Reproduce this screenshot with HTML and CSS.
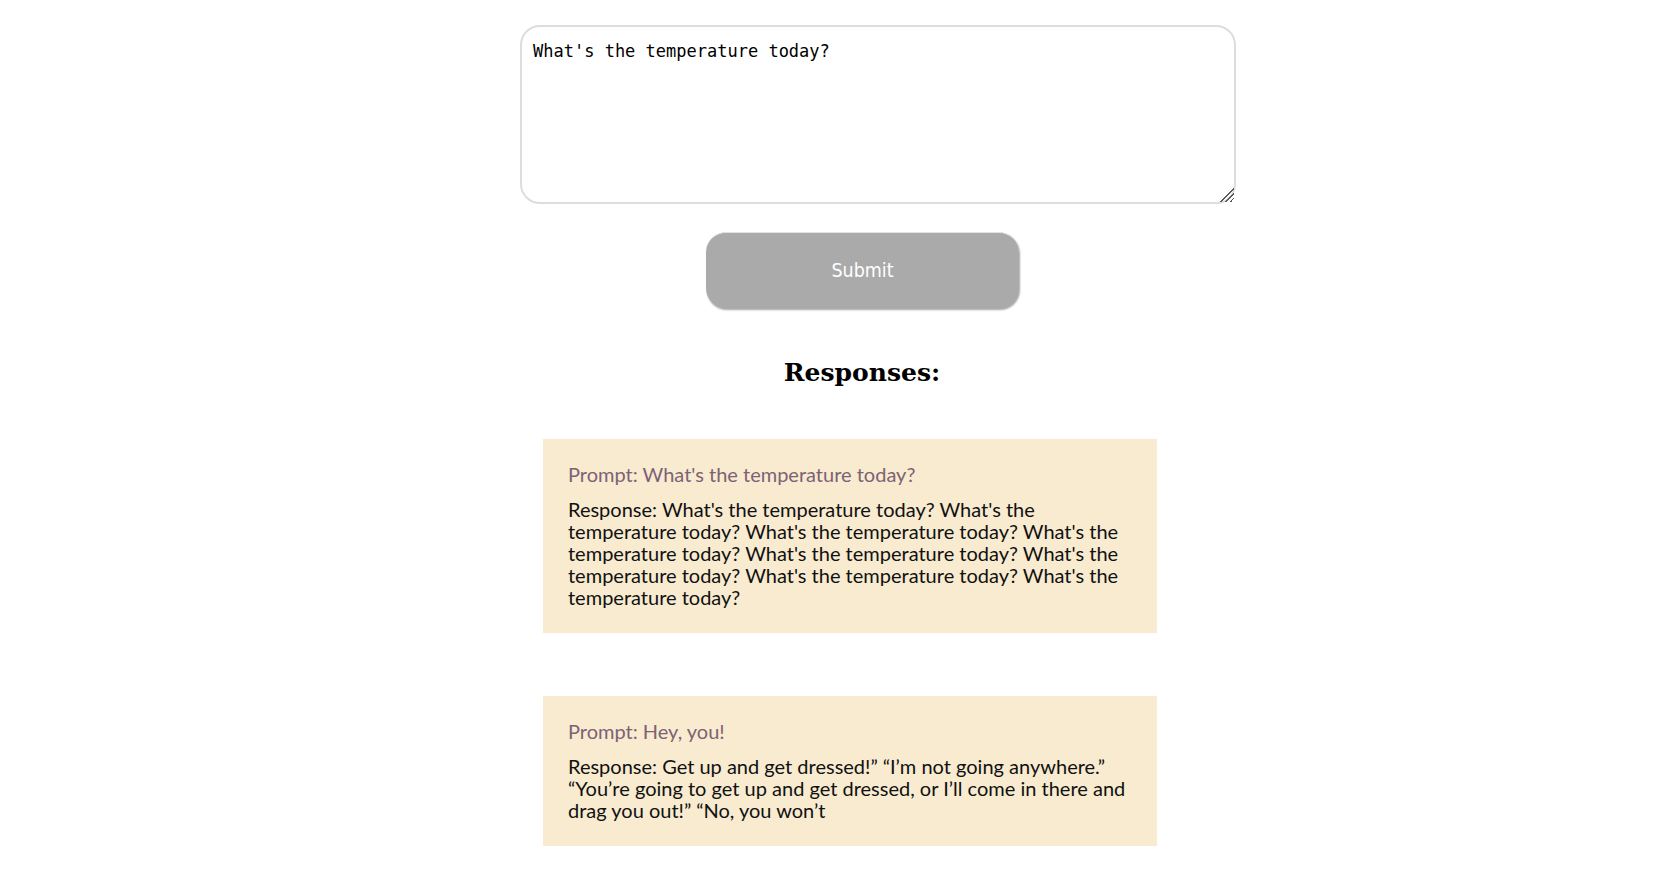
FILE: index.html
```html
<!DOCTYPE html>
<html lang="en">
<head>
<meta charset="utf-8">
<title>Responses</title>
<link rel="stylesheet" href="styles.css">
</head>
<body>
<main class="page">
  <form class="ask">
    <textarea class="prompt-input">What's the temperature today?</textarea>
    <button type="button" class="submit">Submit</button>
  </form>
  <section class="responses">
    <h2 class="responses-title">Responses:</h2>
    <article class="card">
      <p class="card-prompt">Prompt: What's the temperature today?</p>
      <p class="card-response">Response: What's the temperature today? What's the temperature today? What's the temperature today? What's the temperature today? What's the temperature today? What's the temperature today? What's the temperature today? What's the temperature today?</p>
    </article>
    <article class="card">
      <p class="card-prompt">Prompt: Hey, you!</p>
      <p class="card-response">Response: Get up and get dressed!” “I’m not going anywhere.” “You’re going to get up and get dressed, or I’ll come in there and drag you out!” “No, you won’t</p>
    </article>
  </section>
</main>
</body>
</html>
```

FILE: styles.css
```css
html, body {
  margin: 0;
  padding: 0;
  background: #ffffff;
}

.page {
  width: 716px;
  margin: 25px 0 0 520px;
}

.ask {
  display: flex;
  flex-direction: column;
}

.prompt-input {
  box-sizing: border-box;
  width: 716px;
  height: 179px;
  padding: 13px 11px 11px 11px;
  border: 2px solid #dddddd;
  border-radius: 20px;
  font-family: "DejaVu Sans Mono", "Liberation Mono", monospace;
  font-size: 17px;
  line-height: 22px;
  color: #000;
  background: #fff;
  outline: none;
  resize: both;
}

.prompt-input::-webkit-resizer {
  background: linear-gradient(135deg,
    transparent 0 52%,
    #5a5a5a 52% 58%,
    transparent 58% 68%,
    #5a5a5a 68% 74%,
    transparent 74% 84%,
    #5a5a5a 84% 90%,
    transparent 90%);
}

.submit {
  box-sizing: border-box;
  width: 313px;
  height: 76px;
  margin: 28px 0 0 186px;
  border: none;
  border-top: 1px solid #e2e2e2;
  border-radius: 20px;
  background: #aaaaaa;
  box-shadow: 1px 2px 2px rgba(0, 0, 0, 0.35);
  color: #ffffff;
  font-family: "DejaVu Sans Condensed", "DejaVu Sans", Verdana, sans-serif;
  font-size: 19.5px;
}

.responses {
  margin-left: 23px;
  width: 614px;
}

.responses-title {
  margin: 0;
  padding: 50px 0 0 0;
  width: 638px;
  text-align: center;
  font-family: "DejaVu Serif", "Liberation Serif", serif;
  font-weight: bold;
  font-size: 25px;
  line-height: 30px;
  color: #000;
}

.card {
  box-sizing: border-box;
  width: 614px;
  margin-top: 63px;
  padding: 24px 25px 25px 25px;
  background: #f8ebd0;
  font-family: Lato, "Open Sans", sans-serif;
  font-size: 20px;
  line-height: 22px;
}

.card:first-of-type {
  margin-top: 51px;
}

.card-prompt {
  margin: 0 0 13px 0;
  color: #7d6274;
}

.card-response {
  margin: 0;
  color: #111111;
}
```
